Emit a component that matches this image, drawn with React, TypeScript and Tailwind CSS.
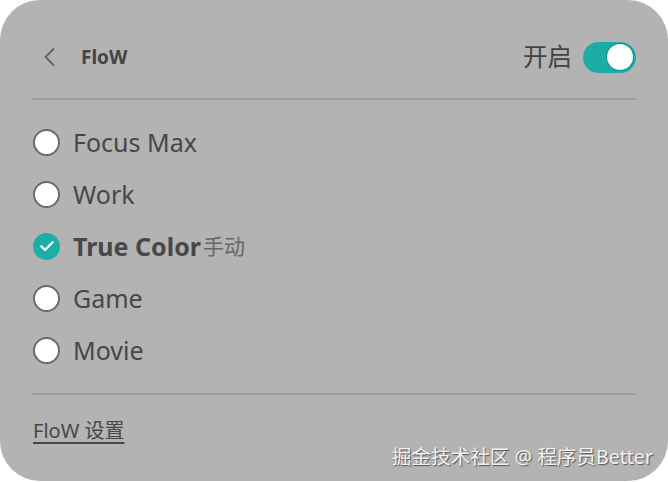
import React from "react";

type Mode = { name: string; checked?: boolean; tag?: string };

const MODES: Mode[] = [
  { name: "Focus Max" },
  { name: "Work" },
  { name: "True Color", checked: true, tag: "手动" },
  { name: "Game" },
  { name: "Movie" },
];

const FONT = { fontFamily: '"Noto Sans", "Noto Sans CJK SC", sans-serif' };

function Radio({ checked }: { checked?: boolean }) {
  if (checked) {
    return (
      <span className="flex h-[27px] w-[27px] items-center justify-center rounded-full bg-[#1eaea8]">
        <svg width="18" height="18" viewBox="0 0 16 16" fill="none">
          <path d="M3 8.3l3.3 3.3L13 4.6" stroke="#fff" strokeWidth="2" strokeLinecap="round" strokeLinejoin="round" />
        </svg>
      </span>
    );
  }
  return <span className="block h-[27px] w-[27px] rounded-full border-2 border-[#6b6b6b] bg-white" />;
}

function Toggle() {
  return (
    <span className="flex h-[31px] w-[53px] items-center justify-end rounded-full bg-[#1dada7] pr-[3px]">
      <span className="block h-[26px] w-[26px] rounded-full bg-white shadow-[0_0_0_1px_#178a85]" />
    </span>
  );
}

export default function App() {
  return (
    <div className="h-[482px] w-[668px] bg-white" style={FONT}>
      <div className="relative h-[481px] w-[668px] rounded-[40px] bg-[#b3b3b3] px-[32px] pt-[41px]">
        {/* header */}
        <div className="flex h-[32px] items-center">
          <svg width="14" height="20" viewBox="0 0 14 20" className="ml-[10px]" fill="none">
            <path d="M11.5 2L3.5 10l8 8" stroke="#666" strokeWidth="2" strokeLinecap="round" strokeLinejoin="round" />
          </svg>
          <span className="ml-[25px] text-[19px] font-bold text-[#444]">FloW</span>
          <span className="ml-auto mr-[11px] text-[24.5px] leading-none text-[#444]">开启</span>
          <Toggle />
        </div>
        <div className="mt-[25px] h-[2px] bg-[#9e9e9e]" />

        {/* modes */}
        <div className="mt-[16px] flex flex-col">
          {MODES.map((m) => (
            <div key={m.name} className="flex h-[52px] items-center">
              <div className="ml-[1px]">
                <Radio checked={m.checked} />
              </div>
              <span
                className={
                  "ml-[13px] text-[25px] leading-none text-[#474747]" + (m.checked ? " font-bold" : "")
                }
              >
                {m.name}
              </span>
              {m.tag && <span className="ml-[2px] text-[21px] leading-none text-[#666]">{m.tag}</span>}
            </div>
          ))}
        </div>
        <div className="mt-[17px] h-[2px] bg-[#9e9e9e]" />

        {/* footer */}
        <div className="mt-[22px] flex">
          <span className="ml-[1px] text-[20px] leading-[28px] text-[#474747] underline decoration-[1.5px] underline-offset-[4px]">
            FloW 设置
          </span>
        </div>

        <span
          className="absolute bottom-[14px] right-[15px] text-[19.6px] leading-none text-[#f2f2f2]"
          style={{ textShadow: "1px 1px 1px #555" }}
        >
          掘金技术社区 @ 程序员Better
        </span>
      </div>
    </div>
  );
}
